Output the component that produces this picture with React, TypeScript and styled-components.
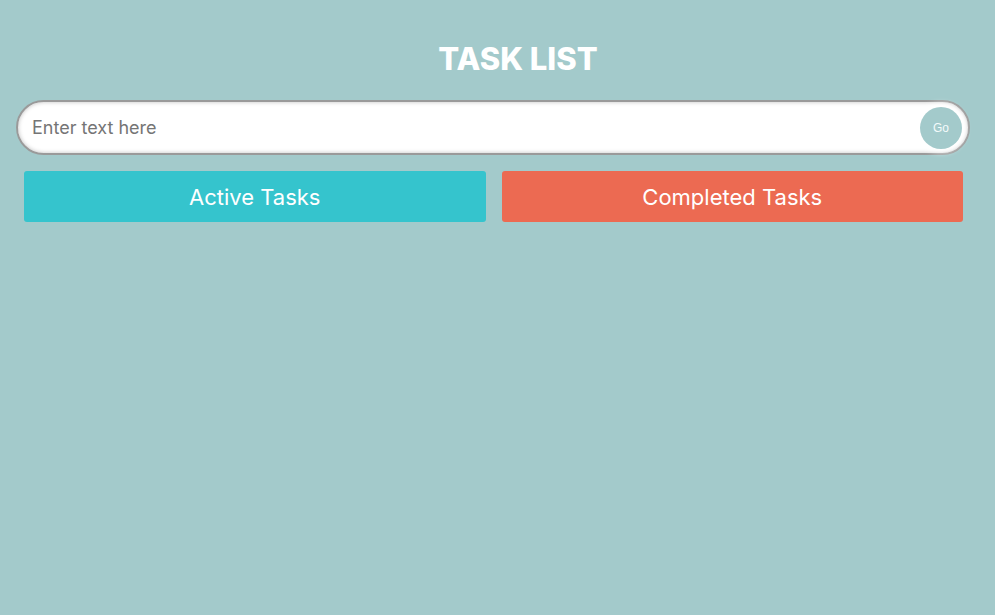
import React from 'react';
import styled, { createGlobalStyle } from 'styled-components';

const GlobalStyle = createGlobalStyle`
  html, body {
    margin: 0;
    padding: 0;
    background-color: #a3cacb;
    font-family: Inter, "Noto Sans", sans-serif;
  }
`;

const Page = styled.div`
  box-sizing: border-box;
  min-height: 615px;
  padding: 40px 25px 0 16px;
`;

const Title = styled.h1`
  color: white;
  font-size: 31px;
  font-weight: 800;
  letter-spacing: 0;
  margin: 0 0 22px 50px;
  text-align: center;
  line-height: 38px;
`;

const InputBar = styled.form`
  align-items: center;
  background-color: white;
  border: 2px solid #9a9a9a;
  border-radius: 30px;
  box-shadow: inset 0 0 4px rgba(0, 0, 0, 0.25);
  box-sizing: border-box;
  display: flex;
  height: 55px;
  padding: 0 6px 0 12px;
`;

const TextInput = styled.input`
  background: transparent;
  border: none;
  color: #333;
  flex: 1;
  font-family: Inter, "Noto Sans", sans-serif;
  font-size: 18px;
  outline: none;

  ::placeholder {
    color: #7a7a7a;
  }
`;

const GoButton = styled.button`
  background-color: #a3cacb;
  border: none;
  border-radius: 50%;
  box-shadow: 0 0 6px 3px rgba(255, 255, 255, 0.95);
  color: #f4fbfb;
  font-family: "Liberation Sans", Arial, sans-serif;
  font-size: 12px;
  height: 42px;
  padding: 0;
  width: 42px;
`;

const Tabs = styled.div`
  display: grid;
  gap: 16px;
  grid-template-columns: 1fr 1fr;
  margin: 16px 7px 0 8px;
`;

const TabButton = styled.button<{ $color: string }>`
  background-color: ${(p) => p.$color};
  border: none;
  border-radius: 3px;
  color: white;
  font-family: Inter, "Noto Sans", sans-serif;
  font-size: 22px;
  font-weight: 400;
  height: 51px;
`;

export default function App() {
  return (
    <>
      <GlobalStyle />
      <Page>
        <Title>TASK LIST</Title>
        <InputBar onSubmit={(e) => e.preventDefault()}>
          <TextInput placeholder="Enter text here" />
          <GoButton type="submit">Go</GoButton>
        </InputBar>
        <Tabs>
          <TabButton $color="#35c4cd">Active Tasks</TabButton>
          <TabButton $color="#ec6a52">Completed Tasks</TabButton>
        </Tabs>
      </Page>
    </>
  );
}
